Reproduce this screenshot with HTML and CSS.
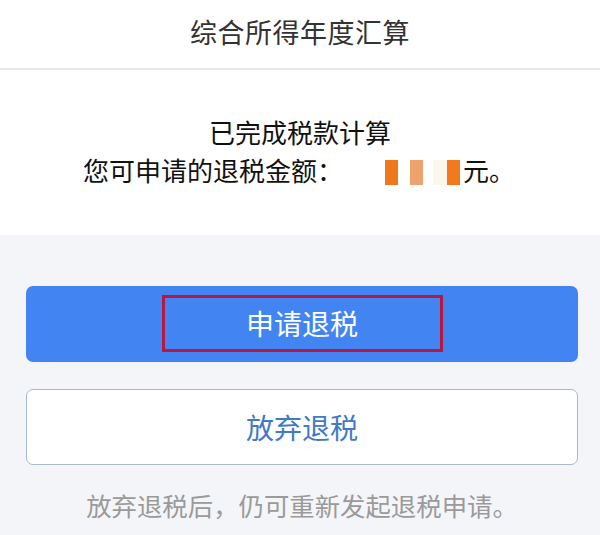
FILE: index.html
```html
<!DOCTYPE html>
<html lang="zh">
<head>
<meta charset="utf-8">
<title>综合所得年度汇算</title>
<link rel="stylesheet" href="styles.css">
</head>
<body>
<div class="page">
  <header class="header">综合所得年度汇算</header>
  <section class="result">
    <div class="line first">已完成税款计算</div>
    <div class="line amount">您可申请的退税金额：<span class="blur"><i class="b1"></i><i class="b2"></i><i class="b3"></i><i class="b4"></i></span>元。</div>
  </section>
  <section class="actions">
    <button class="btn primary"><span class="mark">申请退税</span></button>
    <button class="btn secondary">放弃退税</button>
    <p class="tip">放弃退税后，仍可重新发起退税申请。</p>
  </section>
</div>
</body>
</html>
```
FILE: styles.css
```css
* { box-sizing: border-box; }
html, body { margin: 0; padding: 0; }
body {
  width: 600px;
  height: 535px;
  overflow: hidden;
  background: #f4f5f8;
  font-family: "Noto Sans CJK SC", "Noto Sans", sans-serif;
}
.page { display: flex; flex-direction: column; height: 535px; }
.header {
  height: 70px;
  background: #fff;
  border-bottom: 2px solid #e7e7e7;
  color: #333;
  font-size: 27px;
  line-height: 64px;
  text-align: center;
  letter-spacing: 0.5px;
}
.result {
  background: #fff;
  height: 165px;
  padding-top: 41px;
  text-align: center;
  color: #111;
  font-size: 26px;
}
.line { line-height: 41px; white-space: nowrap; }
.amount { padding-right: 2px; margin-top: -3px; }
.blur { display: inline-flex; align-items: center; height: 26px; padding-left: 42px; vertical-align: -4px; }
.blur i { display: block; width: 13px; height: 25px; }
.b1 { background: #f0781c; margin-right: 12px; }
.b2 { background: #eea36c; margin-right: 10px; }
.b3 { background: #fbf7ea; width: 14px !important; }
.b4 { background: #f27a1d; margin-right: 3px; }
.actions {
  flex: 1;
  padding: 51px 22px 0 26px;
  display: flex;
  flex-direction: column;
}
.btn {
  width: 552px;
  height: 76px;
  border-radius: 7px;
  font-family: inherit;
  font-size: 28px;
  display: flex;
  align-items: center;
  justify-content: center;
  padding: 0;
}
.primary {
  background: #4285f2;
  border: none;
  color: #fff;
}
.mark {
  display: flex;
  align-items: center;
  justify-content: center;
  width: 281px;
  height: 57px;
  border: 3px solid #b8173e;
  margin-top: -2px;
}
.secondary {
  margin-top: 27px;
  background: #fff;
  border: 1.5px solid #a9b9cf;
  color: #4079c8;
}
.tip {
  margin: 25px 0 0;
  text-align: center;
  color: #9a9a9a;
  font-size: 25.4px;
  line-height: 30px;
}
```
